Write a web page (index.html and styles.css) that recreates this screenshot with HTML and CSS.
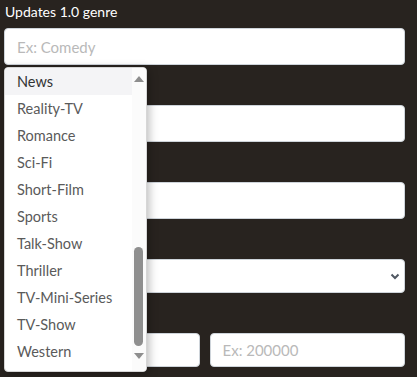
FILE: index.html
```html
<!DOCTYPE html>
<html>
<head>
<meta charset="utf-8">
<link rel="stylesheet" href="styles.css">
</head>
<body>
<div class="form">
  <div class="group">
    <label class="label">Updates 1.0 genre</label>
    <input class="field" type="text" placeholder="Ex: Comedy">
  </div>
  <div class="group">
    <label class="label">&nbsp;</label>
    <input class="field" type="text">
  </div>
  <div class="group">
    <label class="label">&nbsp;</label>
    <input class="field" type="text">
  </div>
  <div class="group">
    <label class="label">&nbsp;</label>
    <div class="select">
      <svg class="chev" width="10" height="7" viewBox="0 0 10 7"><path d="M1.5 1.5 L5 5 L8.5 1.5" fill="none" stroke="#505862" stroke-width="2"/></svg>
    </div>
  </div>
  <div class="group">
    <label class="label">&nbsp;</label>
    <div class="pair">
      <input class="field short" type="text">
      <input class="field short" type="text" placeholder="Ex: 200000">
    </div>
  </div>
</div>

<div class="dropdown">
  <ul class="options">
    <li class="opt active">News</li>
    <li class="opt">Reality-TV</li>
    <li class="opt">Romance</li>
    <li class="opt">Sci-Fi</li>
    <li class="opt">Short-Film</li>
    <li class="opt">Sports</li>
    <li class="opt">Talk-Show</li>
    <li class="opt">Thriller</li>
    <li class="opt">TV-Mini-Series</li>
    <li class="opt">TV-Show</li>
    <li class="opt">Western</li>
  </ul>
  <div class="scrollbar">
    <span class="arrow up"></span>
    <span class="thumb"></span>
    <span class="arrow down"></span>
  </div>
</div>
</body>
</html>
```

FILE: styles.css
```css
* { box-sizing: border-box; }
html, body { margin: 0; padding: 0; }
body {
  background: #28231f;
  width: 417px;
  height: 377px;
  overflow: hidden;
  font-family: "Lato", "Noto Sans", sans-serif;
  position: relative;
}
.form {
  padding: 2px 12px 0 4px;
  display: flex;
  flex-direction: column;
  gap: 14px;
}
.group {
  display: flex;
  flex-direction: column;
  gap: 6px;
}
.label {
  color: #ffffff;
  font-size: 14px;
  line-height: 20px;
  height: 20px;
  padding-left: 1px;
}
.field {
  display: block;
  width: 100%;
  height: 37px;
  background: #fff;
  border: 1px solid #ced4da;
  border-radius: 4px;
  padding: 0 12px;
  font-family: "Lato", "Noto Sans", sans-serif;
  font-size: 15px;
  color: #333;
  outline: none;
}
.field::placeholder { color: #b9b9b9; }
.select {
  height: 34px;
  background: #fff;
  border: 1px solid #ced4da;
  border-radius: 4px;
  display: flex;
  align-items: center;
  justify-content: flex-end;
  padding-right: 4px;
}
.chev { display: block; }
.pair {
  display: grid;
  grid-template-columns: 1fr 1fr;
  gap: 10px;
}
.field.short { height: 34px; }

.dropdown {
  position: absolute;
  left: 4px;
  top: 67px;
  width: 143px;
  height: 305px;
  background: #fff;
  border: 1px solid #d6d6d6;
  border-radius: 4px;
  box-shadow: 2px 2px 10px rgba(0,0,0,0.28);
  overflow: hidden;
  display: flex;
}
.options {
  list-style: none;
  margin: 0;
  padding: 0;
  flex: 1;
}
.opt {
  height: 27px;
  line-height: 27px;
  padding-left: 12px;
  font-size: 14.5px;
  color: #5a5a5a;
}
.opt.active {
  background: #f4f4f6;
  color: #333;
}
.scrollbar {
  width: 14px;
  background: #fbfbfb;
  position: relative;
}
.arrow {
  position: absolute;
  left: 2px;
  width: 0;
  height: 0;
  border-left: 5px solid transparent;
  border-right: 5px solid transparent;
}
.arrow.up {
  top: 8px;
  border-bottom: 6px solid #8e8e8e;
}
.arrow.down {
  top: 285px;
  border-top: 6px solid #8e8e8e;
}
.thumb {
  position: absolute;
  left: 2px;
  top: 179px;
  width: 9px;
  height: 99px;
  border-radius: 5px;
  background: #8f8f8f;
}
```
